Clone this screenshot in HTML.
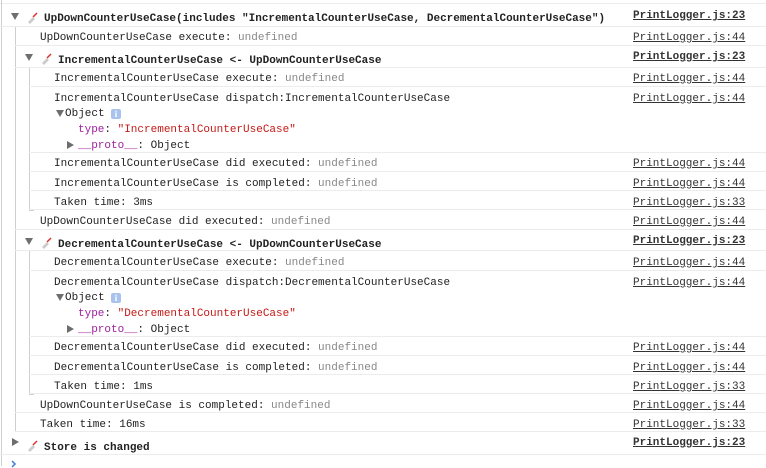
<!DOCTYPE html>
<html><head><meta charset="utf-8"><style>
body{margin:0;width:766px;height:466px;background:#fff;position:relative;overflow:hidden;font-family:"Liberation Mono",monospace;font-size:11px;color:#222}
.r{position:absolute;right:0;border-bottom:1px solid #ececec;box-sizing:border-box}
.t{position:absolute;white-space:pre;line-height:14px;margin-top:2px}
.b{font-weight:bold}
.u{color:#888}
.src{position:absolute;left:633px;white-space:pre;text-decoration:underline;color:#333;line-height:14px;margin-top:2px}
.v{position:absolute;border-left:1px solid #cfcfcf}
.tri{position:absolute;width:0;height:0;border-left:4px solid transparent;border-right:4px solid transparent;border-top:7px solid #6e6e6e;margin-top:1px}
.trr{position:absolute;width:0;height:0;border-top:4px solid transparent;border-bottom:4px solid transparent;border-left:7px solid #6e6e6e;margin-top:1px}
.ic{position:absolute;width:12px;height:12px;margin-top:1px}
.info{position:absolute;width:10px;height:10px;background:#a9c3ef;color:#fff;font-size:9px;line-height:10px;text-align:center;border-radius:2px;font-family:"Liberation Serif",serif;font-weight:bold;margin-top:2px}
.k{color:#a020a0}.s{color:#c41a16}
</style></head><body>
<div class="r" style="left:0;top:0;height:4px"></div>
<div class="v" style="left:1px;top:0;height:466px"></div>
<div class="v" style="left:15px;top:27px;height:404px;border-bottom:1px solid #cfcfcf;width:4px"></div>
<div class="v" style="left:29px;top:68px;height:142px;border-bottom:1px solid #cfcfcf;width:4px"></div>
<div class="v" style="left:29px;top:251px;height:143px;border-bottom:1px solid #cfcfcf;width:4px"></div>

<div class="r" style="left:0;top:4px;height:23px"></div>
<div class="tri" style="left:11px;top:12px"></div>
<svg class="ic" style="left:26px;top:11px" viewBox="0 0 12 12"><path d="M2 10 L7 5 L9 7 L4 12Z" fill="#ccc"/><path d="M7 5 L11 1" stroke="#d33" stroke-width="1.5"/></svg>
<div class="t b" style="left:44px;top:10px">UpDownCounterUseCase(includes "IncrementalCounterUseCase, DecrementalCounterUseCase")</div>
<div class="src b" style="top:7px">PrintLogger.js:23</div>

<div class="r" style="left:15px;top:27px;height:19px"></div>
<div class="t" style="left:40px;top:29px">UpDownCounterUseCase execute: <span class="u">undefined</span></div>
<div class="src" style="top:29px">PrintLogger.js:44</div>

<div class="r" style="left:15px;top:46px;height:22px"></div>
<div class="tri" style="left:25px;top:53px"></div>
<svg class="ic" style="left:40px;top:52px" viewBox="0 0 12 12"><path d="M2 10 L7 5 L9 7 L4 12Z" fill="#ccc"/><path d="M7 5 L11 1" stroke="#d33" stroke-width="1.5"/></svg>
<div class="t b" style="left:58px;top:52px">IncrementalCounterUseCase &lt;- UpDownCounterUseCase</div>
<div class="src b" style="top:48px">PrintLogger.js:23</div>

<div class="r" style="left:29px;top:68px;height:19px"></div>
<div class="t" style="left:54px;top:70px">IncrementalCounterUseCase execute: <span class="u">undefined</span></div>
<div class="src" style="top:70px">PrintLogger.js:44</div>

<div class="r" style="left:29px;top:87px;height:66px"></div>
<div class="t" style="left:54px;top:90px">IncrementalCounterUseCase dispatch:IncrementalCounterUseCase</div>
<div class="src" style="top:90px">PrintLogger.js:44</div>
<div class="tri" style="left:56px;top:109px"></div>
<div class="t" style="left:65px;top:105px">Object</div>
<div class="info" style="left:111px;top:107px">i</div>
<div class="t" style="left:78px;top:121px"><span class="k">type</span>: <span class="s">"IncrementalCounterUseCase"</span></div>
<div class="trr" style="left:67px;top:140px"></div>
<div class="t" style="left:78px;top:137px"><span class="k">__proto__</span>: Object</div>

<div class="r" style="left:29px;top:153px;height:19px"></div>
<div class="t" style="left:54px;top:155px">IncrementalCounterUseCase did executed: <span class="u">undefined</span></div>
<div class="src" style="top:155px">PrintLogger.js:44</div>
<div class="r" style="left:29px;top:172px;height:19px"></div>
<div class="t" style="left:54px;top:175px">IncrementalCounterUseCase is completed: <span class="u">undefined</span></div>
<div class="src" style="top:175px">PrintLogger.js:44</div>
<div class="r" style="left:29px;top:191px;height:19px"></div>
<div class="t" style="left:54px;top:194px">Taken time: 3ms</div>
<div class="src" style="top:194px">PrintLogger.js:33</div>

<div class="r" style="left:15px;top:210px;height:20px"></div>
<div class="t" style="left:40px;top:213px">UpDownCounterUseCase did executed: <span class="u">undefined</span></div>
<div class="src" style="top:213px">PrintLogger.js:44</div>

<div class="r" style="left:15px;top:230px;height:21px"></div>
<div class="tri" style="left:25px;top:237px"></div>
<svg class="ic" style="left:40px;top:236px" viewBox="0 0 12 12"><path d="M2 10 L7 5 L9 7 L4 12Z" fill="#ccc"/><path d="M7 5 L11 1" stroke="#d33" stroke-width="1.5"/></svg>
<div class="t b" style="left:58px;top:236px">DecrementalCounterUseCase &lt;- UpDownCounterUseCase</div>
<div class="src b" style="top:232px">PrintLogger.js:23</div>

<div class="r" style="left:29px;top:251px;height:20px"></div>
<div class="t" style="left:54px;top:254px">DecrementalCounterUseCase execute: <span class="u">undefined</span></div>
<div class="src" style="top:254px">PrintLogger.js:44</div>

<div class="r" style="left:29px;top:271px;height:66px"></div>
<div class="t" style="left:54px;top:274px">DecrementalCounterUseCase dispatch:DecrementalCounterUseCase</div>
<div class="src" style="top:274px">PrintLogger.js:44</div>
<div class="tri" style="left:56px;top:293px"></div>
<div class="t" style="left:65px;top:289px">Object</div>
<div class="info" style="left:111px;top:291px">i</div>
<div class="t" style="left:78px;top:305px"><span class="k">type</span>: <span class="s">"DecrementalCounterUseCase"</span></div>
<div class="trr" style="left:67px;top:324px"></div>
<div class="t" style="left:78px;top:321px"><span class="k">__proto__</span>: Object</div>

<div class="r" style="left:29px;top:337px;height:19px"></div>
<div class="t" style="left:54px;top:339px">DecrementalCounterUseCase did executed: <span class="u">undefined</span></div>
<div class="src" style="top:339px">PrintLogger.js:44</div>
<div class="r" style="left:29px;top:356px;height:19px"></div>
<div class="t" style="left:54px;top:359px">DecrementalCounterUseCase is completed: <span class="u">undefined</span></div>
<div class="src" style="top:359px">PrintLogger.js:44</div>
<div class="r" style="left:29px;top:375px;height:19px"></div>
<div class="t" style="left:54px;top:378px">Taken time: 1ms</div>
<div class="src" style="top:378px">PrintLogger.js:33</div>

<div class="r" style="left:15px;top:394px;height:19px"></div>
<div class="t" style="left:40px;top:397px">UpDownCounterUseCase is completed: <span class="u">undefined</span></div>
<div class="src" style="top:397px">PrintLogger.js:44</div>
<div class="r" style="left:15px;top:413px;height:19px"></div>
<div class="t" style="left:40px;top:416px">Taken time: 16ms</div>
<div class="src" style="top:416px">PrintLogger.js:33</div>

<div class="r" style="left:0;top:432px;height:23px"></div>
<div class="trr" style="left:12px;top:437px"></div>
<svg class="ic" style="left:26px;top:439px" viewBox="0 0 12 12"><path d="M2 10 L7 5 L9 7 L4 12Z" fill="#ccc"/><path d="M7 5 L11 1" stroke="#d33" stroke-width="1.5"/></svg>
<div class="t b" style="left:44px;top:439px">Store is changed</div>
<div class="src b" style="top:434px">PrintLogger.js:23</div>
<svg style="position:absolute;left:10px;top:460px" width="8" height="8" viewBox="0 0 8 8"><path d="M2 1 L5 4 L2 7" stroke="#3b7ddd" stroke-width="1.5" fill="none"/></svg>
</body></html>
